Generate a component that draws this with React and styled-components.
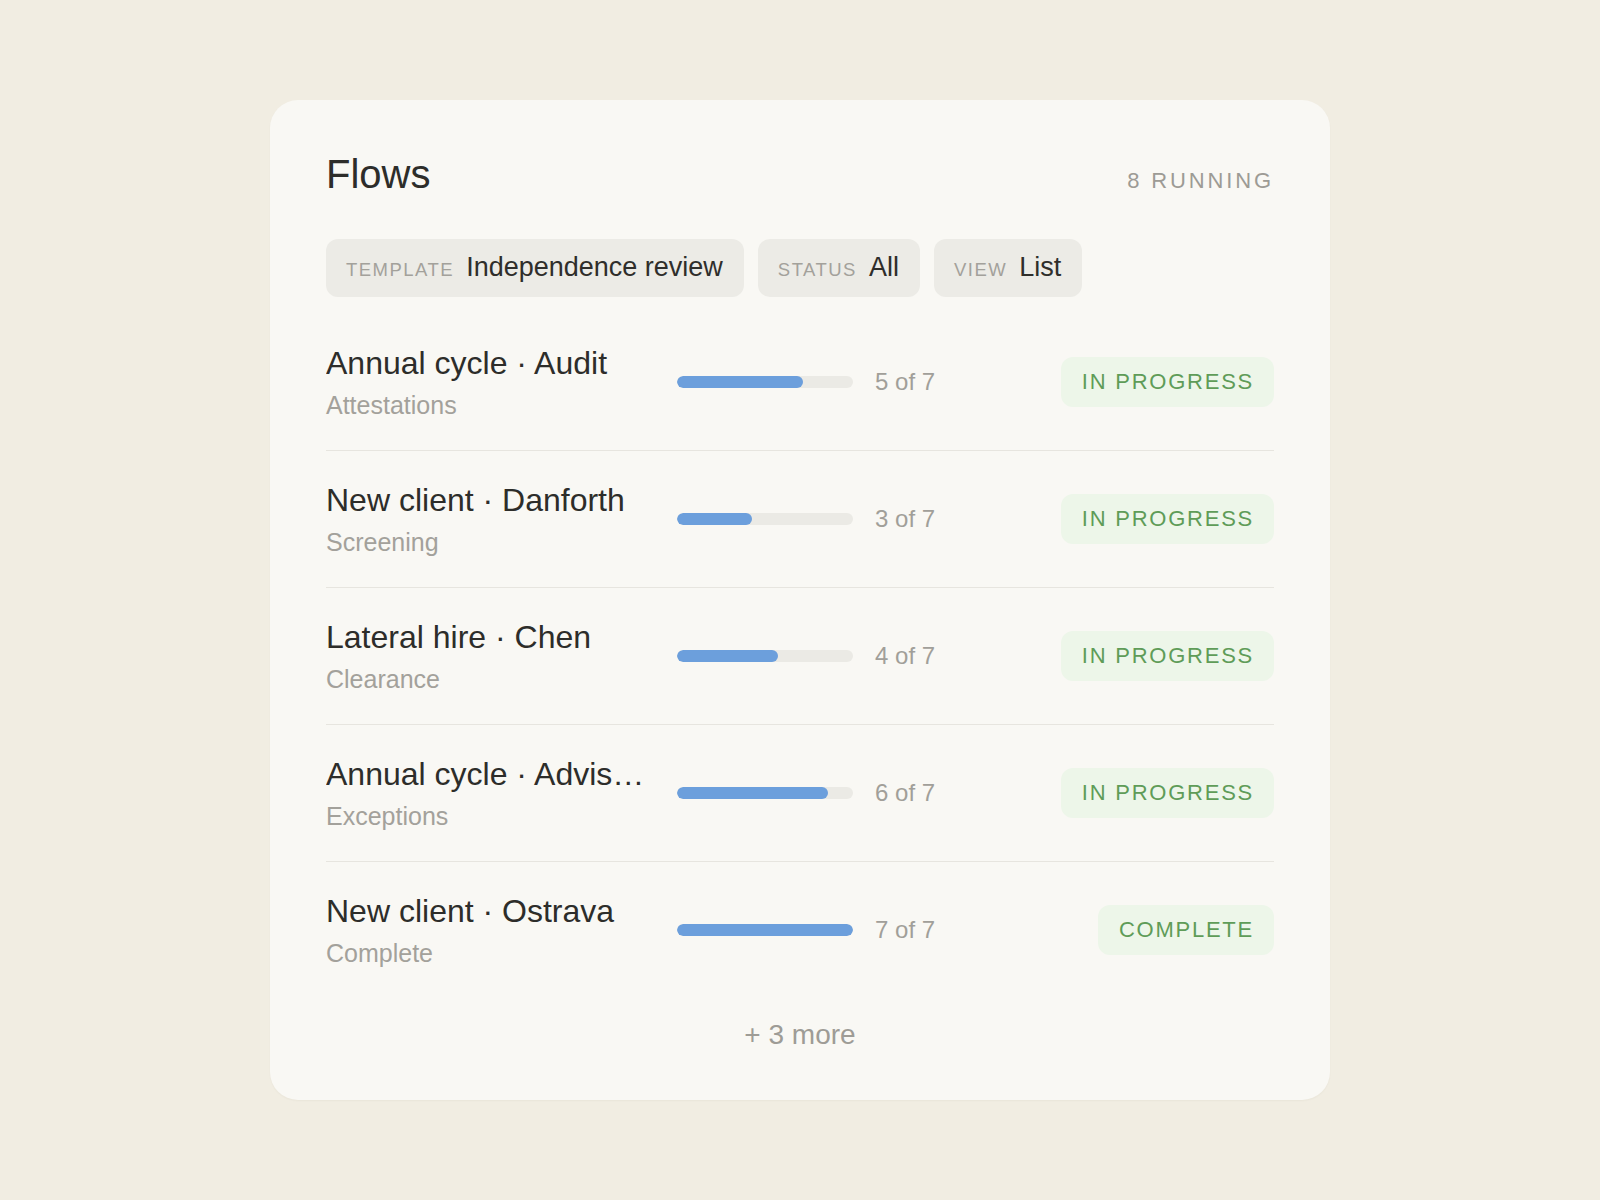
import React from "react";
import styled, { createGlobalStyle } from "styled-components";

const flows = [
  { name: "Annual cycle · Audit", stage: "Attestations", done: 5, total: 7, status: "In progress" },
  { name: "New client · Danforth", stage: "Screening", done: 3, total: 7, status: "In progress" },
  { name: "Lateral hire · Chen", stage: "Clearance", done: 4, total: 7, status: "In progress" },
  { name: "Annual cycle · Advisory", stage: "Exceptions", done: 6, total: 7, status: "In progress" },
  { name: "New client · Ostrava", stage: "Complete", done: 7, total: 7, status: "Complete" },
];

const filters = [
  { label: "Template", value: "Independence review" },
  { label: "Status", value: "All" },
  { label: "View", value: "List" },
];

const App = () => {
  return (
    <>
      <GlobalStyle />
      <Page>
        <Card>
          <Header>
            <Title>Flows</Title>
            <Running>8 running</Running>
          </Header>

          <Filters>
            {filters.map((f) => (
              <Chip key={f.label}>
                <ChipLabel>{f.label}</ChipLabel>
                <ChipValue>{f.value}</ChipValue>
              </Chip>
            ))}
          </Filters>

          <List>
            {flows.map((flow) => (
              <Row key={flow.name}>
                <Info>
                  <Name>{flow.name}</Name>
                  <Stage>{flow.stage}</Stage>
                </Info>
                <Track>
                  <Fill style={{ width: `${(flow.done / flow.total) * 100}%` }} />
                </Track>
                <Count>
                  {flow.done} of {flow.total}
                </Count>
                <Badge>{flow.status}</Badge>
              </Row>
            ))}
          </List>

          <More>+ 3 more</More>
        </Card>
      </Page>
    </>
  );
};

export default App;

const GlobalStyle = createGlobalStyle`
  html, body {
    margin: 0;
    padding: 0;
    background: #f1ede2;
  }
  body {
    font-family: "Liberation Sans", Arial, sans-serif;
    -webkit-font-smoothing: antialiased;
  }
  * {
    box-sizing: border-box;
  }
`;

const Page = styled.div`
  display: flex;
  justify-content: center;
  align-items: center;
  min-height: 100vh;
`;

const Card = styled.div`
  width: 1060px;
  background: #f9f8f4;
  border-radius: 28px;
  padding: 54px 56px 48px;
  box-shadow: 0 1px 2px rgba(60, 50, 30, 0.04);
`;

const Header = styled.div`
  display: flex;
  justify-content: space-between;
  align-items: baseline;
`;

const Title = styled.h1`
  margin: 0;
  font-size: 40px;
  line-height: 40px;
  font-weight: 400;
  color: #2d2d2a;
`;

const Running = styled.span`
  font-size: 22px;
  letter-spacing: 0.13em;
  text-transform: uppercase;
  color: #9d9b95;
`;

const Filters = styled.div`
  display: flex;
  gap: 14px;
  margin-top: 45px;
`;

const Chip = styled.div`
  display: flex;
  align-items: baseline;
  gap: 12px;
  padding: 12px 21px 13px 20px;
  background: #ecebe6;
  border-radius: 12px;
`;

const ChipLabel = styled.span`
  font-size: 18.5px;
  letter-spacing: 0.08em;
  text-transform: uppercase;
  color: #a3a19b;
`;

const ChipValue = styled.span`
  font-size: 27px;
  line-height: 1.2;
  color: #2f2e2b;
`;

const List = styled.div`
  margin-top: 17px;
`;

const Row = styled.div`
  display: flex;
  align-items: center;
  padding: 31px 0 30px;
  border-bottom: 1px solid #e7e5df;

  &:last-child {
    border-bottom: none;
  }
`;

const Info = styled.div`
  width: 320px;
  margin-right: 31px;
  display: flex;
  flex-direction: column;
`;

const Name = styled.div`
  font-size: 32px;
  line-height: 37px;
  color: #2d2d2a;
  white-space: nowrap;
  overflow: hidden;
  text-overflow: ellipsis;
`;

const Stage = styled.div`
  margin-top: 9px;
  font-size: 25px;
  line-height: 29px;
  color: #a3a19b;
`;

const Track = styled.div`
  width: 176px;
  height: 12px;
  border-radius: 6px;
  background: #ebeae5;
  overflow: hidden;
`;

const Fill = styled.div`
  height: 100%;
  border-radius: 6px;
  background: #6c9fdc;
`;

const Count = styled.span`
  margin-left: 22px;
  font-size: 24px;
  color: #a19f99;
`;

const Badge = styled.span`
  margin-left: auto;
  display: flex;
  align-items: center;
  height: 50px;
  padding: 0 20px 0 21px;
  border-radius: 12px;
  background: #edf6e9;
  color: #5f9c58;
  font-size: 22px;
  letter-spacing: 0.08em;
  text-transform: uppercase;
`;

const More = styled.div`
  padding-top: 20px;
  text-align: center;
  font-size: 28px;
  line-height: 34px;
  color: #9e9c96;
`;
